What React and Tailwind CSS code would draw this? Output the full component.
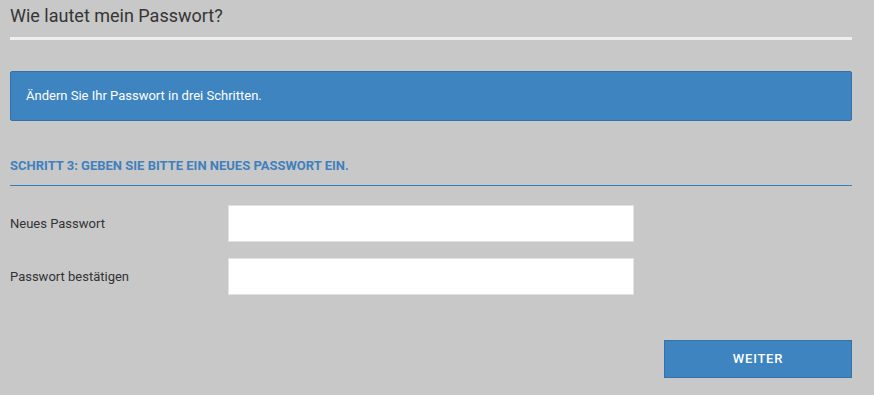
export default function App() {
  return (
    <div className="w-[874px] h-[395px] bg-[#c8c8c8] overflow-hidden" style={{ fontFamily: "Roboto, 'Liberation Sans', sans-serif" }}>
      <div className="ml-[10px] w-[842px] flex flex-col">
        <h1 className="h-[35px] pt-[4px] text-[18px] leading-[24px] text-[#353535]">Wie lautet mein Passwort?</h1>
        <div className="h-[3px] bg-[#efefef] mt-[2px]"></div>
        <div className="mt-[31px] h-[50px] bg-[#3d84c0] border border-[#3672a8] rounded-[2px] flex items-center pl-[15px] text-white text-[13px]">
          Ändern Sie Ihr Passwort in drei Schritten.
        </div>
        <div className="mt-[38px] pb-[12px] text-[13px] leading-[14px] font-bold text-[#3f80bd]">
          SCHRITT 3: GEBEN SIE BITTE EIN NEUES PASSWORT EIN.
        </div>
        <div className="h-px bg-[#3a7cc2]"></div>
        <div className="mt-[19px] flex flex-col gap-[16px]">
          <div className="flex items-center">
            <label className="w-[218px] text-[13px] text-[#333]">Neues Passwort</label>
            <input type="password" className="w-[406px] h-[37px] bg-white border border-[#e2e2e2] outline-none" />
          </div>
          <div className="flex items-center">
            <label className="w-[218px] text-[13px] text-[#333]">Passwort bestätigen</label>
            <input type="password" className="w-[406px] h-[37px] bg-white border border-[#e2e2e2] outline-none" />
          </div>
        </div>
        <div className="mt-[45px] flex justify-end">
          <button className="w-[188px] h-[38px] bg-[#3d84c0] border border-[#3672a8] text-white text-[13px] font-medium tracking-[0.06em]">WEITER</button>
        </div>
      </div>
    </div>
  );
}
